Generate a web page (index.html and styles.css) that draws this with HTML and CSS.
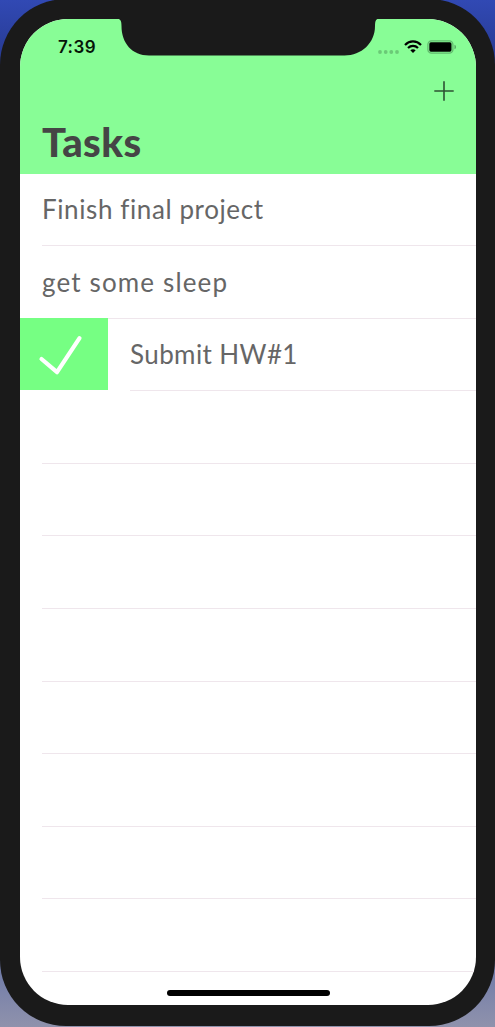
FILE: index.html
```html
<!DOCTYPE html>
<html lang="en">
<head>
<meta charset="utf-8">
<title>Tasks</title>
<link rel="stylesheet" href="styles.css">
</head>
<body>
<div class="phone">
  <main class="screen">
    <header class="header">
      <div class="status">
        <span class="time">7:39</span>
        <div class="indicators">
          <svg class="cellular" width="22" height="4" viewBox="0 0 22 4"><circle cx="2" cy="2" r="1.9"/><circle cx="7.7" cy="2" r="1.9"/><circle cx="13.3" cy="2" r="1.9"/><circle cx="19" cy="2" r="1.9"/></svg>
          <svg class="wifi" width="18" height="14" viewBox="0 0 18 14"><path d="M1 4.9C5.5.3 12.500.3 17 4.900M4 8C6.900 5.100 11.100 5.100 14 8" fill="none" stroke="#000" stroke-width="2.200"/><path d="M6.300 10.300Q9 8.100 11.700 10.300L9 13.100Z"/></svg>
          <svg class="battery" width="30" height="14" viewBox="0 0 30 14"><rect x=".9" y=".9" width="25" height="12.200" rx="3.600" fill="none" stroke="#62b96e" stroke-width="1.300"/><rect x="2.300" y="2.300" width="22.200" height="9.400" rx="1.600"/><path d="M27.500 4.800q1.500.5 1.500 2.200t-1.500 2.200z" fill="#55a362"/></svg>
        </div>
      </div>
      <button class="add" aria-label="Add task"><svg width="20" height="20" viewBox="0 0 20 20"><path d="M10 .3V19.700M.3 10H19.700" stroke="#2d5132" stroke-width="1.600"/></svg></button>
      <h1 class="title">Tasks</h1>
    </header>
    <ul class="list">
      <li class="row"><span class="label finish">Finish final project</span></li>
      <li class="row"><span class="label sleep">get some sleep</span></li>
      <li class="row swiped">
        <span class="done"><svg width="88" height="72" viewBox="0 0 88 72"><path d="M21.500 41L37 54.200L59.500 20.200" fill="none" stroke="#fff" stroke-width="4.200" stroke-linecap="round" stroke-linejoin="round"/></svg></span>
        <span class="label submit">Submit HW#1</span>
      </li>
      <li class="row"></li><li class="row"></li><li class="row"></li><li class="row"></li>
      <li class="row"></li><li class="row"></li><li class="row"></li><li class="row"></li>
    </ul>
  </main>
  <svg class="notch" width="260" height="38" viewBox="0 0 260 38"><path d="M0 0V1C2.500 1 3.500 3 3.500 8C3.500 25 14 37.500 31 37.500H226.500C243.500 37.500 257 25 257 8C257 3 258 1 260 1V0Z"/></svg>
  <div class="home"></div>
</div>
</body>
</html>
```
FILE: styles.css
```css
* { box-sizing: border-box; }
body {
  margin: 0;
  height: 1027px;
  overflow: hidden;
  background: linear-gradient(#3149b4 0, #293d98 50px, #6c78a8 960px, #8f92ac 1027px);
  font-family: Lato, sans-serif;
}
.phone {
  position: relative;
  width: 495px;
  height: 1027px;
  margin-top: -1px;
  padding: 20px 19.500px 21px 20px;
  border-radius: 66px;
  background: #1a1a1a;
}
.screen {
  height: 986px;
  overflow: hidden;
  border-radius: 48px;
  background: #fff;
}
.header {
  display: flex;
  flex-direction: column;
  height: 154.500px;
  background: #88fd96;
}
.status {
  display: flex;
  justify-content: space-between;
  height: 52px;
  padding: 18px 18.500px 0 38px;
}
.time {
  font: 600 17px/20px Inter, sans-serif;
  letter-spacing: .4px;
  color: #061508;
}
.indicators { display: flex; align-items: flex-start; padding-top: 2.500px; }
.cellular { margin: 10px 4px 0 0; fill: #6bca77; }
.wifi { margin-right: 5px; }
.add {
  display: flex;
  align-self: flex-end;
  margin: 10px 21.500px 0 0;
  padding: 0;
  border: 0;
  background: none;
}
.title {
  margin: 16px 0 0 22px;
  font-size: 40px;
  line-height: 50px;
  font-weight: 900;
  letter-spacing: .4px;
  color: #454545;
}
.list { margin: 0; padding: 0; list-style: none; }
.row {
  display: flex;
  align-items: center;
  height: 72.600px;
  margin-left: 22px;
  border-bottom: 1px solid #efe6ec;
  color: #666;
  font-size: 26px;
}
.label { white-space: nowrap; }
.finish { letter-spacing: .6px; }
.sleep { letter-spacing: 1.150px; }
.submit { letter-spacing: .4px; }
.swiped { margin-left: 110px; }
.done { display: flex; flex: none; margin: 0 22px 0 -110px; background: #76ff83; }
.notch { position: absolute; left: 118px; top: 19px; fill: #1a1a1a; }
.home {
  position: absolute;
  left: 166.500px;
  top: 991px;
  width: 163px;
  height: 5.500px;
  border-radius: 3px;
  background: #000;
}
```
